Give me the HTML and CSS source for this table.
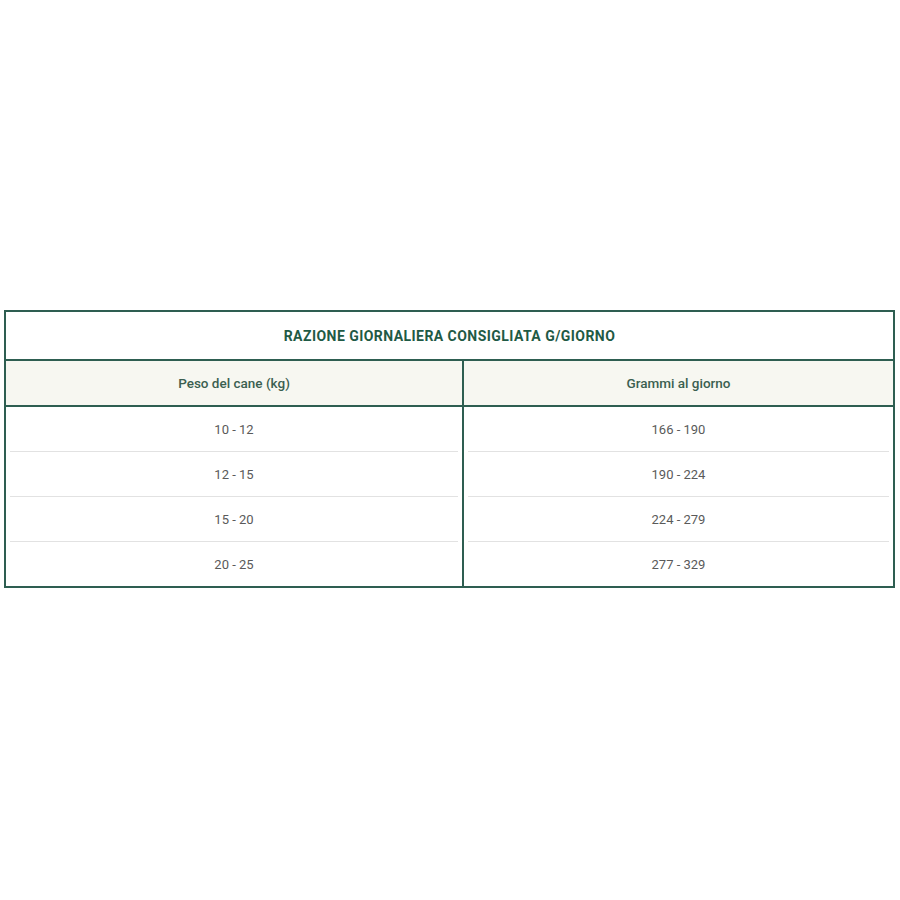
FILE: index.html
```html
<!DOCTYPE html>
<html lang="it">
<head>
<meta charset="utf-8">
<title>Razione giornaliera</title>
<link rel="stylesheet" href="styles.css">
</head>
<body>
<div class="ration">
  <div class="title">RAZIONE GIORNALIERA CONSIGLIATA G/GIORNO</div>
  <div class="grid">
    <div class="head left">Peso del cane (kg)</div>
    <div class="head">Grammi al giorno</div>
    <div class="cell left"><span>10 - 12</span></div>
    <div class="cell"><span>166 - 190</span></div>
    <div class="cell left"><span>12 - 15</span></div>
    <div class="cell"><span>190 - 224</span></div>
    <div class="cell left"><span>15 - 20</span></div>
    <div class="cell"><span>224 - 279</span></div>
    <div class="cell left last"><span>20 - 25</span></div>
    <div class="cell last"><span>277 - 329</span></div>
  </div>
</div>
</body>
</html>
```
FILE: styles.css
```css
html, body {
  margin: 0;
  padding: 0;
  background: #fff;
}
body {
  font-family: Roboto, "Liberation Sans", sans-serif;
}
.ration {
  margin: 310px 0 0 4px;
  width: 887px;
  border: 2px solid #2e5e51;
}
.title {
  height: 47px;
  display: flex;
  align-items: center;
  justify-content: center;
  font-size: 14px;
  font-weight: 700;
  color: #1f5a45;
  letter-spacing: 0.45px;
  border-bottom: 2px solid #2e5e51;
}
.grid {
  display: grid;
  grid-template-columns: 458px 1fr;
}
.left {
  border-right: 2px solid #2e5e51;
}
.head {
  height: 44px;
  background: #f7f7f1;
  display: flex;
  align-items: center;
  justify-content: center;
  font-size: 13.5px;
  font-weight: 500;
  color: #3b5f50;
  border-bottom: 2px solid #2e5e51;
}
.cell {
  padding: 0 4px;
}
.cell span {
  display: flex;
  height: 44px;
  align-items: center;
  justify-content: center;
  font-size: 13px;
  color: #5a5a5a;
  border-bottom: 1px solid #e2e2e2;
}
.cell.last span {
  border-bottom: none;
}
```
